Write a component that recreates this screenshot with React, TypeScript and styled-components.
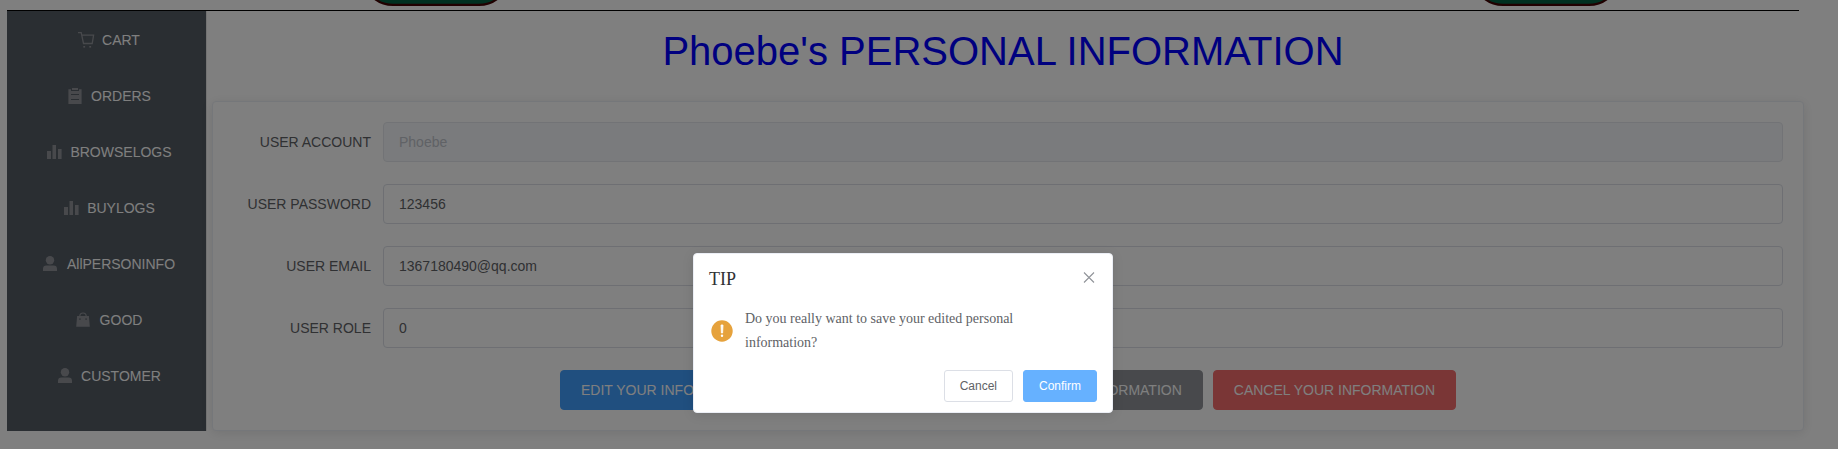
import React from 'react';
import styled, { createGlobalStyle } from 'styled-components';

const sans = `'Liberation Sans', Arial, sans-serif`;

const GlobalStyle = createGlobalStyle`
  *, *::before, *::after { box-sizing: border-box; }
  html, body { margin: 0; background: #fff; overflow: hidden; }
  body { font-family: 'Liberation Serif', 'Times New Roman', serif; }
`;

const Page = styled.div`
  height: 449px;
  padding-left: 7px;
  display: flex;
  flex-direction: column;
  overflow: hidden;
`;

const TopBar = styled.header`
  height: 11px;
  width: 1792px;
  flex: none;
  display: flex;
  justify-content: space-between;
  padding: 0 183px 0 359px;
  border-bottom: 1px solid #000;
`;

const PillSvg = styled.svg`
  display: block;
  flex: none;
`;

const Body = styled.div`
  display: flex;
  height: 420px;
`;

const Sidebar = styled.nav`
  width: 200px;
  flex: none;
  padding-top: 1px;
  background: #545c64;
  border-right: 1px solid #e6e6e6;
`;

const MenuItem = styled.a`
  height: 56px;
  display: flex;
  align-items: center;
  justify-content: center;
  font: 14px ${sans};
  color: #fff;
`;

const MenuIcon = styled.svg`
  width: 18px;
  height: 18px;
  margin: 0 7.5px 0 3.5px;
  color: #909399;
  flex: none;
`;

const Main = styled.main`
  width: 1592px;
  flex: none;
`;

const Title = styled.h1`
  margin: 0;
  height: 90px;
  padding-top: 17px;
  text-align: center;
  font: 400 40px/46px ${sans};
  color: blue;
`;

const Card = styled.section`
  width: 1592px;
  height: 330px;
  margin-left: 5px;
  padding: 20px;
  border: 1px solid #ebeef5;
  border-radius: 4px;
  background: #fff;
  box-shadow: 0 2px 12px 0 rgba(0, 0, 0, 0.1);
`;

const FormRow = styled.label`
  display: flex;
  height: 40px;
  margin-bottom: 22px;
`;

const Label = styled.span`
  width: 150px;
  flex: none;
  padding-right: 12px;
  text-align: right;
  font: 14px/40px ${sans};
  color: #606266;
`;

const Input = styled.input`
  flex: 1;
  height: 40px;
  padding: 0 15px;
  border: 1px solid #dcdfe6;
  border-radius: 4px;
  outline: none;
  font: 14px ${sans};
  color: #606266;
  background: #fff;
  &:disabled {
    background: #f5f7fa;
    border-color: #e4e7ed;
    color: #c0c4cc;
  }
`;

const Actions = styled.div`
  display: flex;
  gap: 10px;
  width: 896px;
  margin: 0 auto;
`;

const ActionButton = styled.button<{ $color: string; $grow?: boolean }>`
  flex: ${(p) => (p.$grow ? '1 1 0' : 'none')};
  min-width: 0;
  height: 40px;
  padding: 0 20px;
  border: 1px solid ${(p) => p.$color};
  border-radius: 4px;
  background: ${(p) => p.$color};
  color: #fff;
  font: 14px ${sans};
  white-space: nowrap;
`;

const Overlay = styled.div`
  position: absolute;
  inset: 0;
  height: 449px;
  background: rgba(0, 0, 0, 0.5);
  display: flex;
  align-items: flex-start;
  padding: 253px 0 0 693px;
`;

const Dialog = styled.div`
  width: 420px;
  height: 160px;
  padding-bottom: 10px;
  background: #fff;
  border: 1px solid #ebeef5;
  border-radius: 4px;
  box-shadow: 0 2px 12px 0 rgba(0, 0, 0, 0.1);
`;

const DialogHeader = styled.div`
  display: flex;
  justify-content: space-between;
  padding: 16px 15px 9px;
  font-size: 18px;
  line-height: 18px;
  color: #303133;
`;

const CloseIcon = styled.svg`
  width: 16px;
  height: 16px;
  color: #909399;
`;

const DialogContent = styled.div`
  display: flex;
  align-items: center;
  gap: 12px;
  padding: 10px 15px;
  font-size: 14px;
  line-height: 24px;
  color: #606266;
`;

const WarningIcon = styled.svg`
  width: 24px;
  height: 24px;
`;

const DialogButtons = styled.div`
  display: flex;
  justify-content: flex-end;
  gap: 10px;
  padding: 5px 15px 0;
`;

const SmallButton = styled.button<{ $primary?: boolean }>`
  height: 32px;
  padding: 0 15px;
  border: 1px solid ${(p) => (p.$primary ? '#66b1ff' : '#dcdfe6')};
  border-radius: 3px;
  background: ${(p) => (p.$primary ? '#66b1ff' : '#fff')};
  color: ${(p) => (p.$primary ? '#fff' : '#606266')};
  font: 12px ${sans};
`;

const icons = {
  cart: (
    <>
      <path d="M1 1.6h3.2l2.3 10.9h8.7l1.4-8.4H5" fill="none" stroke="currentColor" strokeWidth="1.3" />
      <rect x="6.3" y="15" width="1.8" height="1.6" fill="currentColor" />
      <rect x="12.3" y="15" width="1.8" height="1.6" fill="currentColor" />
    </>
  ),
  orders: (
    <path
      fill="currentColor"
      fillRule="evenodd"
      d="M2.4 2.2H5V4h8V2.2h2.6V17H2.4zM6 1h6v2H6zM5 7v1h8V7zM5 12v1h8v-1z"
    />
  ),
  chart: <path fill="currentColor" d="M2 8h4v8H2zM7.5 2h3.5v14H7.5zM13 6h3.6V16H13z" />,
  person: (
    <>
      <circle cx="9" cy="5.3" r="4.2" fill="currentColor" />
      <path d="M2 16V13.8a3.4 3.4 0 0 1 3.4-3.4h7.2a3.4 3.4 0 0 1 3.4 3.4V16z" fill="currentColor" />
    </>
  ),
  bag: (
    <>
      <path d="M5.8 5.2C5.8 .9 12.2 .9 12.2 5.2" fill="none" stroke="currentColor" strokeWidth="1.2" />
      <path
        fill="currentColor"
        fillRule="evenodd"
        d="M3.1 5h11.8l.9 10.8H2.2zM5.4 7.2v1.9h1.1V7.2zM11.5 7.2v1.9h1.1V7.2z"
      />
    </>
  ),
};

const menu: { icon: keyof typeof icons; text: string }[] = [
  { icon: 'cart', text: 'CART' },
  { icon: 'orders', text: 'ORDERS' },
  { icon: 'chart', text: 'BROWSELOGS' },
  { icon: 'chart', text: 'BUYLOGS' },
  { icon: 'person', text: 'AllPERSONINFO' },
  { icon: 'bag', text: 'GOOD' },
  { icon: 'person', text: 'CUSTOMER' },
];

const fields = [
  { label: 'USER ACCOUNT', value: 'Phoebe', disabled: true },
  { label: 'USER PASSWORD', value: '123456' },
  { label: 'USER EMAIL', value: '1367180490@qq.com' },
  { label: 'USER ROLE', value: '0' },
];

const Pill = () => (
  <PillSvg width="140" height="7" viewBox="0 0 140 7">
    <path d="M6.5-3Q15 4.9 27 4.9H113Q125 4.9 133.5-3" fill="#006040" stroke="#400000" strokeWidth="2.2" />
  </PillSvg>
);

export default function App() {
  return (
    <>
      <GlobalStyle />
      <Page>
        <TopBar>
          <Pill />
          <Pill />
        </TopBar>
        <Body>
          <Sidebar>
            {menu.map((m) => (
              <MenuItem key={m.text}>
                <MenuIcon viewBox="0 0 18 18">{icons[m.icon]}</MenuIcon>
                {m.text}
              </MenuItem>
            ))}
          </Sidebar>
          <Main>
            <Title>Phoebe's PERSONAL INFORMATION</Title>
            <Card>
              {fields.map((f) => (
                <FormRow key={f.label}>
                  <Label>{f.label}</Label>
                  <Input defaultValue={f.value} disabled={f.disabled} />
                </FormRow>
              ))}
              <Actions>
                <ActionButton $color="#409eff">EDIT YOUR INFORMATION</ActionButton>
                <ActionButton $color="#67c23a" $grow aria-label="Save" />
                <ActionButton $color="#909399">RESET YOUR INFORMATION</ActionButton>
                <ActionButton $color="#f56c6c">CANCEL YOUR INFORMATION</ActionButton>
              </Actions>
            </Card>
          </Main>
        </Body>
      </Page>
      <Overlay>
        <Dialog role="dialog">
          <DialogHeader>
            <span>TIP</span>
            <CloseIcon viewBox="0 0 16 16">
              <path d="M3 2.5l10 10M13 2.5l-10 10" stroke="currentColor" strokeWidth="1.1" />
            </CloseIcon>
          </DialogHeader>
          <DialogContent>
            <WarningIcon viewBox="0 0 24 24">
              <circle cx="13" cy="12" r="10.7" fill="#e6a23c" />
              <path d="M12 6h2l-.4 8h-1.2z" fill="#fff" stroke="#fff" strokeWidth=".8" strokeLinejoin="round" />
              <circle cx="13" cy="16.8" r="1.2" fill="#fff" />
            </WarningIcon>
            <div>
              Do you really want to save your edited personal
              <br />
              information?
            </div>
          </DialogContent>
          <DialogButtons>
            <SmallButton>Cancel</SmallButton>
            <SmallButton $primary>Confirm</SmallButton>
          </DialogButtons>
        </Dialog>
      </Overlay>
    </>
  );
}
